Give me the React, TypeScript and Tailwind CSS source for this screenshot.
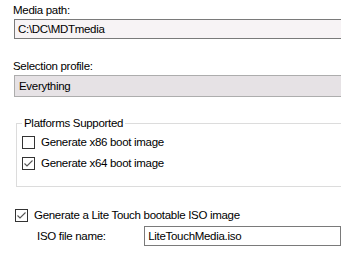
import React from 'react'

// Deployment share media dialog: media path, selection profile, platform options

function CheckBox({ checked }: { checked?: boolean }) {
  return (
    <span className="flex h-[13px] w-[13px] shrink-0 items-center justify-center border border-[#333333] bg-white">
      {checked && (
        <svg width="11" height="11" viewBox="0 0 11 11" fill="none">
          <path d="M1.5 5.5 L4 8 L9.5 2.5" stroke="#555555" strokeWidth="1.1" />
        </svg>
      )}
    </span>
  )
}

export default function App() {
  return (
    <div
      className="relative h-[254px] w-[341px] overflow-hidden bg-white text-[11.5px] leading-[15px] tracking-[-0.3px] text-black"
      style={{ fontFamily: '"Liberation Sans", Arial, sans-serif' }}
    >
      <div className="pl-[13px] pt-[3px]">Media path:</div>
      <div className="ml-[14px] mt-[1px] flex h-[20px] w-[340px] items-center border border-[#7a7a7a] bg-[#f7f3f5] pl-[3px]">
        C:\DC\MDTmedia
      </div>

      <div className="mt-[20px] pl-[13px]">Selection profile:</div>
      <div className="ml-[14px] mt-[1px] flex h-[22px] w-[340px] items-center border border-[#adadad] bg-[#e6e2e5] pl-[4px]">
        Everything
      </div>

      <fieldset className="ml-[16px] mt-[19px] h-[71px] w-[340px] border border-[#dcdcdc] pl-[5px]">
        <legend className="px-[2px] leading-[15px]">Platforms Supported</legend>
        <label className="mt-[4px] flex items-center gap-[6px]">
          <CheckBox />
          <span>Generate x86 boot image</span>
        </label>
        <label className="mt-[6px] flex items-center gap-[6px]">
          <CheckBox checked />
          <span>Generate x64 boot image</span>
        </label>
      </fieldset>

      <label className="ml-[15px] mt-[21px] flex items-center gap-[6px]">
        <CheckBox checked />
        <span>Generate a Lite Touch bootable ISO image</span>
      </label>
      <div className="mt-[3px] flex items-center">
        <span className="w-[146px] pl-[37px]">ISO file name:</span>
        <div className="flex h-[20px] w-[200px] items-center border border-[#7a7a7a] bg-white pl-[3px]">
          LiteTouchMedia.iso
        </div>
      </div>
    </div>
  )
}
